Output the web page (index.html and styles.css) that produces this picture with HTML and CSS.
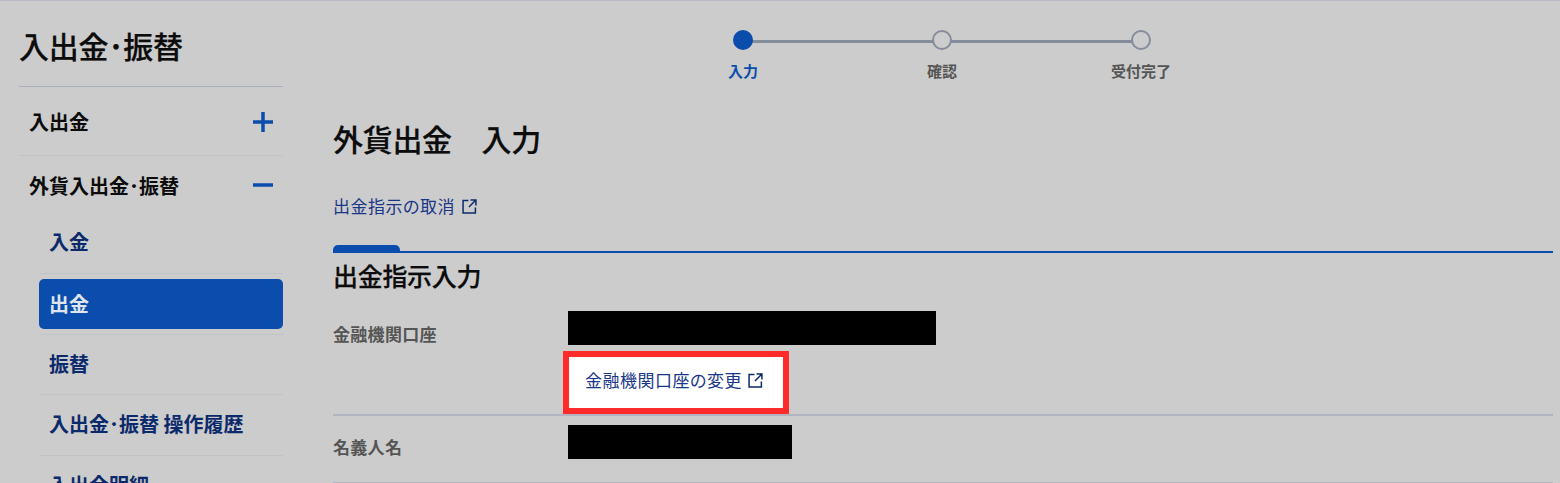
FILE: index.html
```html
<!DOCTYPE html>
<html lang="ja">
<head>
    <meta charset="UTF-8">
    <title>外貨出金 入力</title>
    <link rel="stylesheet" href="styles.css">
</head>
<body>
    <div class="container">
        <aside class="sidebar">
            <div class="side-title">入出金･振替</div>
            <div class="side-group">
                <span>入出金</span>
                <svg class="toggle" viewBox="0 0 20 20"><path d="M0 10H20M10 0V20"/></svg>
            </div>
            <div class="side-group open">
                <span>外貨入出金･振替</span>
                <svg class="toggle" viewBox="0 0 20 20"><path d="M0 10H20"/></svg>
            </div>
            <ul class="side-menu">
                <li class="first">入金</li>
                <li class="active">出金</li>
                <li>振替</li>
                <li>入出金･振替 操作履歴</li>
                <li>入出金明細</li>
            </ul>
        </aside>
        <main class="content">
            <div class="stepper">
                <div class="step current"><div class="dot"></div><div class="step-label">入力</div></div>
                <div class="step"><div class="dot"></div><div class="step-label">確認</div></div>
                <div class="step"><div class="dot"></div><div class="step-label">受付完了</div></div>
            </div>
            <h1 class="page-title">外貨出金　入力</h1>
            <a class="link cancel-link">出金指示の取消
                <svg class="ext" viewBox="0 0 14 14"><path d="M6 1.5H1V13H12.5V8M8 1H13V6M13 1L6.5 7.5"/></svg>
            </a>
            <div class="tab-rule"><div class="tab"></div></div>
            <h2 class="section-title">出金指示入力</h2>
            <div class="form-row bank-row">
                <div class="form-label">金融機関口座</div>
                <div class="form-value">
                    <div class="mask mask-bank"></div>
                    <div class="highlight">
                        <a class="link">金融機関口座の変更
                            <svg class="ext" viewBox="0 0 14 14"><path d="M6 1.5H1V13H12.5V8M8 1H13V6M13 1L6.5 7.5"/></svg>
                        </a>
                    </div>
                </div>
            </div>
            <div class="form-row name-row">
                <div class="form-label">名義人名</div>
                <div class="form-value">
                    <div class="mask mask-name"></div>
                </div>
            </div>
        </main>
    </div>
</body>
</html>
```

FILE: styles.css
```css
* {
    margin: 0;
    padding: 0;
    box-sizing: border-box;
}

html, body {
    height: 483px;
    overflow: hidden;
}

body {
    background: #cccccc;
    border-top: 1px solid #b6bac4;
    font-family: "Noto Sans CJK JP", "Noto Sans", sans-serif;
    font-feature-settings: "palt";
    color: #0c0c0c;
}

.container {
    display: flex;
    gap: 50px;
    padding-left: 19px;
}

/* sidebar */
.sidebar {
    width: 264px;
    flex-shrink: 0;
}

.side-title {
    height: 86px;
    padding-top: 22px;
    font-size: 30px;
    letter-spacing: -0.2px;
    line-height: 44px;
    font-weight: 500;
    -webkit-text-stroke: 0.25px #0c0c0c;
    border-bottom: 1px solid #a9afbc;
}

.side-group {
    display: flex;
    justify-content: space-between;
    align-items: center;
    height: 69px;
    padding: 1px 10px 0 10px;
    font-size: 20px;
    font-weight: 700;
    border-bottom: 1px solid #c2c3c7;
}

.side-group.open {
    height: 62px;
    padding-top: 0;
    padding-bottom: 4px;
    border-bottom: none;
}

.toggle {
    width: 20px;
    height: 20px;
}

.toggle path {
    stroke: #0b4dac;
    stroke-width: 3.5;
    fill: none;
}

.side-menu {
    list-style: none;
    padding-left: 20px;
}

.side-menu li {
    display: flex;
    align-items: center;
    height: 61px;
    padding: 0 0 3px 10px;
    font-size: 20px;
    font-weight: 700;
    color: #0b2a6b;
    border-bottom: 1px solid #c2c3c7;
}

.side-menu li.first {
    height: 56px;
    padding-bottom: 8px;
    margin-bottom: 5px;
}

.side-menu li.active {
    height: 50px;
    margin-bottom: 5px;
    padding-bottom: 2px;
    background: #0b4dac;
    color: #dfe4ee;
    border-bottom: none;
    border-radius: 5px;
}

.side-menu li.active + li {
    border-top: 1px solid #c2c3c7;
}

/* main */
.content {
    flex: 1;
    padding-right: 7px;
}

.stepper {
    display: flex;
    justify-content: center;
    padding-top: 29px;
    margin-left: -2px;
}

.step {
    position: relative;
    width: 199px;
    display: flex;
    flex-direction: column;
    align-items: center;
}

.dot {
    position: relative;
    z-index: 1;
    width: 20px;
    height: 20px;
    border-radius: 50%;
    border: 2.5px solid #858c9b;
    background: #cccccc;
}

.step.current .dot {
    background: #0b4dac;
    border-color: #0b4dac;
}

/* connector to the next step */
.step:not(:last-child)::after {
    content: '';
    position: absolute;
    top: 10px;
    left: 50%;
    width: 199px;
    height: 3px;
    background: #858c9b;
}

.step-label {
    margin-top: 11px;
    font-size: 15px;
    line-height: 20px;
    font-weight: 700;
    color: #555555;
}

.step.current .step-label {
    color: #0b4dac;
}

.page-title {
    margin-top: 37px;
    font-size: 30px;
    letter-spacing: -0.3px;
    line-height: 40px;
    font-weight: 500;
    -webkit-text-stroke: 0.25px #0c0c0c;
}

.link {
    display: inline-flex;
    align-items: center;
    gap: 7px;
    font-size: 17px;
    letter-spacing: 0.5px;
    line-height: 24px;
    color: #1a3688;
}

.ext {
    width: 15px;
    height: 15px;
}

.ext path {
    stroke: #0b2a6b;
    stroke-width: 1.4;
    fill: none;
}

.cancel-link {
    display: flex;
    margin-top: 36px;
}

.tab-rule {
    margin-top: 27px;
    height: 8px;
    border-bottom: 2px solid #0b4dac;
}

.tab {
    width: 67px;
    height: 8px;
    background: #0b4dac;
    border-radius: 5px 5px 0 0;
}

.section-title {
    margin-top: 4px;
    font-size: 25px;
    letter-spacing: -0.3px;
    line-height: 36px;
    font-weight: 500;
    -webkit-text-stroke: 0.25px #0c0c0c;
}

.form-row {
    display: flex;
    border-bottom: 2px solid #b0b4c0;
}

.form-label {
    width: 235px;
    font-size: 17px;
    letter-spacing: 0.3px;
    line-height: 24px;
    font-weight: 700;
    color: #555555;
}

.bank-row {
    margin-top: 18px;
    height: 105px;
}

.bank-row .form-label {
    padding-top: 11px;
}

.mask {
    background: #000000;
    height: 34px;
}

.mask-bank {
    width: 368px;
}

.mask-name {
    width: 224px;
}

.highlight {
    display: flex;
    align-items: center;
    width: 226px;
    height: 63px;
    margin: 6px 0 0 -5px;
    padding: 0 17px;
    background: #ffffff;
    border: 6px solid #ff2a2a;
}

.highlight .link {
    gap: 6px;
    white-space: nowrap;
    margin: 0 0 5px -1px;
}

.name-row {
    height: 68px;
    padding-top: 9px;
}

.name-row .form-label {
    padding-top: 10px;
}
```
